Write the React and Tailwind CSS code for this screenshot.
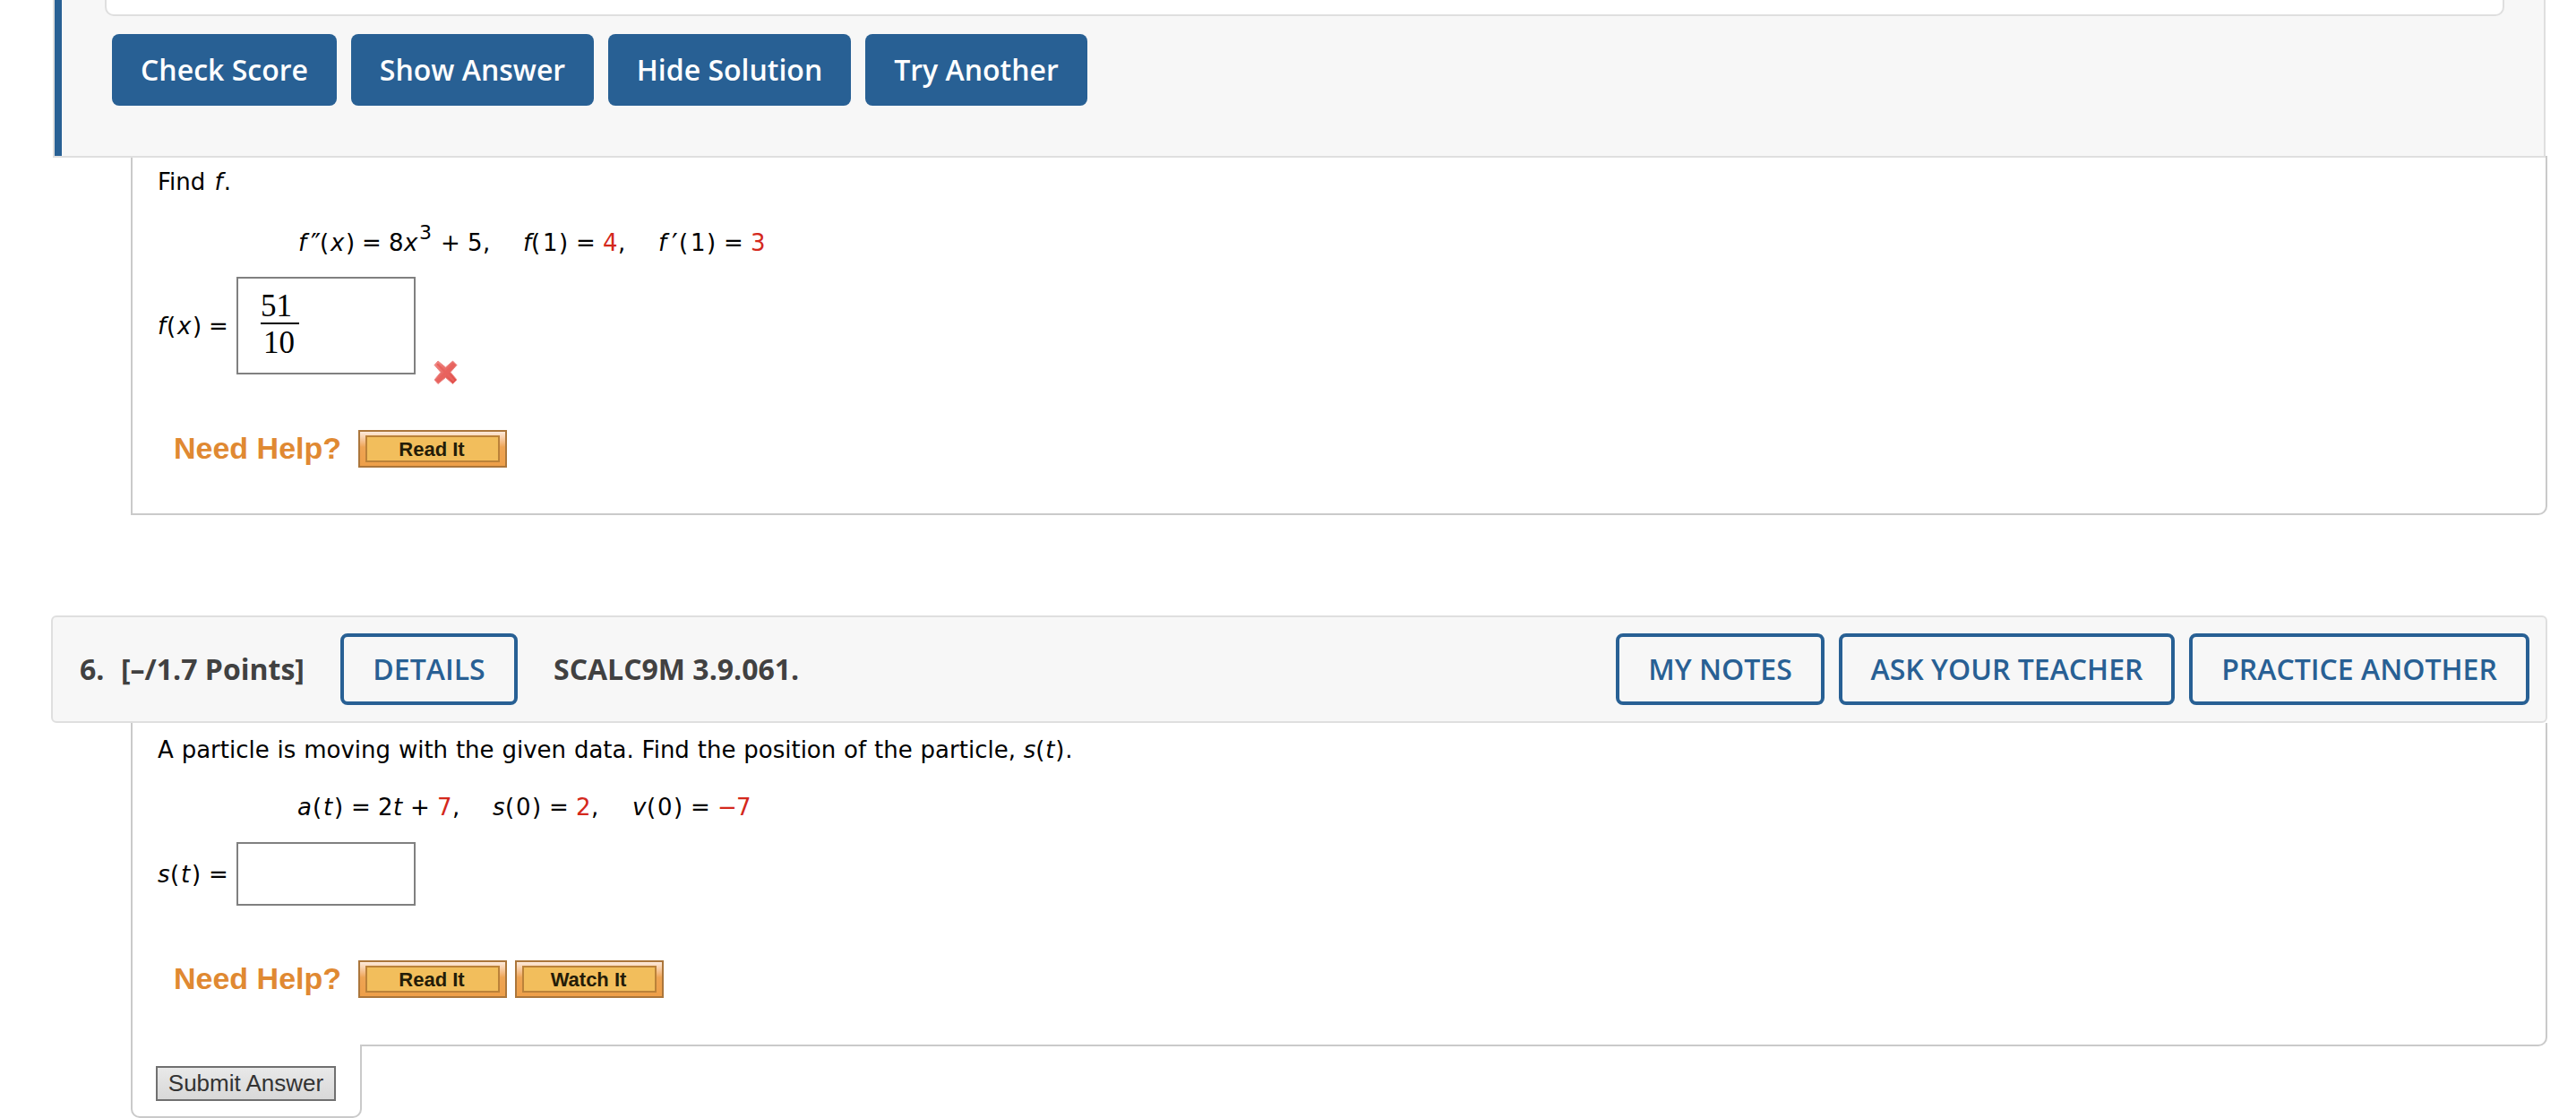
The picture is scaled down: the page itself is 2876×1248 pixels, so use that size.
const open = 'font-["Open_Sans",sans-serif]'

function SolidButton({ className, children }) {
  return (
    <button className={`h-20 rounded-lg bg-[#286094] text-[32px] leading-[80px] font-semibold whitespace-nowrap text-white ${open} ${className}`}>
      {children}
    </button>
  )
}

function OutlineButton({ className, children }) {
  return (
    <button className={`h-20 rounded-lg border-4 border-[#286094] text-[32px] leading-[72px] font-semibold whitespace-nowrap text-[#286094] ${open} ${className}`}>
      {children}
    </button>
  )
}

function HelpButton({ children }) {
  return (
    <button className='h-[42px] w-[166px] border-2 border-[#ab763b] bg-linear-to-b from-[#fdeadb] via-[#eea453] via-45% to-[#ee9f49] px-[6px] py-1 font-["Liberation_Sans",Arial,sans-serif]'>
      <span className="block h-[30px] w-[150px] border-2 border-[#bb8239] bg-[#f2be5c] pr-0.5 text-center text-[22px] leading-[28px] font-bold text-[#241c08]">
        {children}
      </span>
    </button>
  )
}

function NeedHelp({ className, children }) {
  return (
    <div className={`flex h-[42px] items-center pl-[44px] ${className}`}>
      <span className='w-[206px] pb-[3px] font-["Liberation_Sans",Arial,sans-serif] text-[34px] leading-[40px] font-bold whitespace-nowrap text-[#e08932]'>
        Need Help?
      </span>
      <div className="flex gap-[9px]">{children}</div>
    </div>
  )
}

function Tokens({ className, items }) {
  return (
    <div className={`flex h-[30px] leading-[30px] whitespace-pre ${className}`}>
      {items.map(([text, cls], i) => (
        <span key={i} className={`shrink-0 ${cls}`}>{text}</span>
      ))}
    </div>
  )
}

const ode = [
  ["f", "w-[14px] italic"],
  ["″", "w-[10px] pt-px text-[30px] tracking-tighter"],
  ["(", "w-[12px]"],
  ["x", "w-[17px] italic"],
  [")", "w-[18px]"],
  ["=", "w-[30px]"],
  ["8", "w-[17px]"],
  ["x", "w-[17px] italic"],
  ["3", "w-[24px] -mt-[11px] text-[22px]"],
  ["+", "w-[30px]"],
  ["5", "w-[17px]"],
  [",", "w-[45px]"],
  ["f", "w-[9px] italic"],
  ["(", "w-[13px]"],
  ["1", "w-[18px]"],
  [")", "w-[19px]"],
  ["=", "w-[30px]"],
  ["4", "w-[17px] text-[#d4281c]"],
  [",", "w-[45px]"],
  ["f", "w-[15px] italic"],
  ["′", "w-[8px] pt-px text-[30px]"],
  ["(", "w-[13px]"],
  ["1", "w-[18px]"],
  [")", "w-[19px]"],
  ["=", "w-[30px]"],
  ["3", "text-[#d4281c]"],
]

const motion = [
  ["a", "w-[17px] italic"],
  ["(", "w-[12px]"],
  ["t", "w-[12px] italic"],
  [")", "w-[19px]"],
  ["=", "w-[30px]"],
  ["2", "w-[17px]"],
  ["t", "w-[19px] italic"],
  ["+", "w-[30px]"],
  ["7", "w-[17px] text-[#d4281c]"],
  [",", "w-[45px]"],
  ["s", "w-[14px] italic"],
  ["(", "w-[12px]"],
  ["0", "w-[18px]"],
  [")", "w-[19px]"],
  ["=", "w-[30px]"],
  ["2", "w-[17px] text-[#d4281c]"],
  [",", "w-[46px]"],
  ["v", "w-[16px] italic"],
  ["(", "w-[12px]"],
  ["0", "w-[18px]"],
  [")", "w-[19px]"],
  ["=", "w-[30px]"],
  ["−", "w-[21px] text-[#d4281c]"],
  ["7", "text-[#d4281c]"],
]

export default function App() {
  return (
    <div className='h-[1248px] w-[2876px] overflow-hidden bg-white font-["DejaVu_Sans",Verdana,sans-serif] text-[26px] text-black'>
      <section className="relative z-10 ml-[59px] flex h-[176px] w-[2783px] border-x-2 border-b-2 border-[#dfdfdf] bg-[#f7f7f7]">
        <div className="w-2 bg-[#286094]" />
        <div className="pl-12">
          <div className="h-[18px] w-[2679px] rounded-b-[10px] border-x-2 border-b-2 border-[#dfdfdf] bg-white" />
          <div className="mt-5 ml-2 flex gap-4">
            <SolidButton className="w-[251px]">Check Score</SolidButton>
            <SolidButton className="w-[271px]">Show Answer</SolidButton>
            <SolidButton className="w-[271px]">Hide Solution</SolidButton>
            <SolidButton className="w-[248px]">Try Another</SolidButton>
          </div>
        </div>
      </section>

      <section className="-mt-0.5 ml-[146px] h-[401px] w-[2698px] rounded-br-[10px] border-x-2 border-b-2 border-[#cacaca] pt-[14px] pl-7">
        <p className="leading-[30px] [word-spacing:2px] whitespace-pre">Find <i className="mr-px">f</i>.</p>
        <Tokens className="mt-[38px] pl-[157px]" items={ode} />
        <div className="mt-[23px] flex h-[109px]">
          <Tokens className="mt-10 w-[88px]" items={[["f", "w-[10px] italic"], ["(", "w-[12px]"], ["x", "w-[17px] italic"], [")", "w-[18px]"], ["=", ""]]} />
          <div className='flex h-[109px] w-[200px] flex-col border-2 border-[#808080] pt-[13px] pl-[25px] font-["Liberation_Serif",serif] text-[35px] leading-[36px]'>
            <span className="h-9 w-[43px]">51</span>
            <span className="h-0.5 w-[43px] bg-black" />
            <span className="mt-[3px] h-9 w-[43px] pl-[3px]">10</span>
          </div>
          <svg className="mt-[93px] ml-5 size-[27px]" viewBox="0 0 27 27" fill="none">
            <defs>
              <linearGradient id="cross" x1="0" y1="0" x2="1" y2="1">
                <stop offset="0" stopColor="#f08a86" />
                <stop offset="1" stopColor="#de4540" />
              </linearGradient>
            </defs>
            <path d="M5 1 L13.5 8 L21.5 1 L26 5.5 L19 13.5 L26 22 L21.5 26.5 L13.5 19.5 L5 26.5 L1 22 L8 13.5 L1 5.5 Z" fill="url(#cross)" stroke="#ef8a87" strokeWidth="1" strokeLinejoin="round" />
            <path d="M5 5 L22 22.5 M22 5 L5 22.5" stroke="#e9625d" strokeWidth="2.5" strokeLinecap="round" />
          </svg>
        </div>
        <NeedHelp className="mt-[62px] -ml-[26px]">
          <HelpButton>Read It</HelpButton>
        </NeedHelp>
      </section>

      <header className={`mt-[112px] ml-[57px] flex h-[120px] w-[2787px] items-center rounded-md border-2 border-[#dfdfdf] bg-[#f7f7f7] pr-[18px] pl-[30px] text-[32px] font-bold text-[#414141] ${open}`}>
        <span className="w-[46px]">6.</span>
        <span className="w-[245px] whitespace-nowrap">[–/1.7 Points]</span>
        <OutlineButton className="w-[198px]">DETAILS</OutlineButton>
        <span className="ml-10 whitespace-nowrap">SCALC9M 3.9.061.</span>
        <div className="ml-auto flex gap-4">
          <OutlineButton className="w-[233px]">MY NOTES</OutlineButton>
          <OutlineButton className="w-[375px]">ASK YOUR TEACHER</OutlineButton>
          <OutlineButton className="w-[380px]">PRACTICE ANOTHER</OutlineButton>
        </div>
      </header>

      <section className="ml-[146px] h-[361px] w-[2698px] rounded-br-[10px] border-x-2 border-b-2 border-[#cacaca] pt-[15px] pl-7">
        <p className="leading-[30px] [word-spacing:0.6px] whitespace-pre">
          A particle is moving with the given data. Find the position of the particle, <i>s</i><span className="tracking-[0.8px]">(<i>t</i>).</span>
        </p>
        <Tokens className="mt-[34px] pl-[156px]" items={motion} />
        <div className="mt-6 flex h-[71px]">
          <Tokens className="mt-[21px] w-[88px]" items={[["s", "w-[14px] italic"], ["(", "w-[12px]"], ["t", "w-[12px] italic"], [")", "w-[19px]"], ["=", ""]]} />
          <div className="h-[71px] w-[200px] border-2 border-[#808080]" />
        </div>
        <NeedHelp className="mt-[61px] -ml-[26px]">
          <HelpButton>Read It</HelpButton>
          <HelpButton>Watch It</HelpButton>
        </NeedHelp>
      </section>

      <div className="relative z-10 -mt-0.5 ml-[146px] h-[82px] w-[258px] rounded-b-[10px] border-x-2 border-b-2 border-[#cacaca] bg-white pt-6 pl-[26px]">
        <button className='block h-[39px] w-[201px] border-2 border-[#707070] bg-linear-to-b from-[#e9e9e9] to-[#d8d8d8] font-["Liberation_Sans",Arial,sans-serif] text-[26px] leading-[35px] whitespace-nowrap text-[#333]'>
          Submit Answer
        </button>
      </div>
    </div>
  )
}
